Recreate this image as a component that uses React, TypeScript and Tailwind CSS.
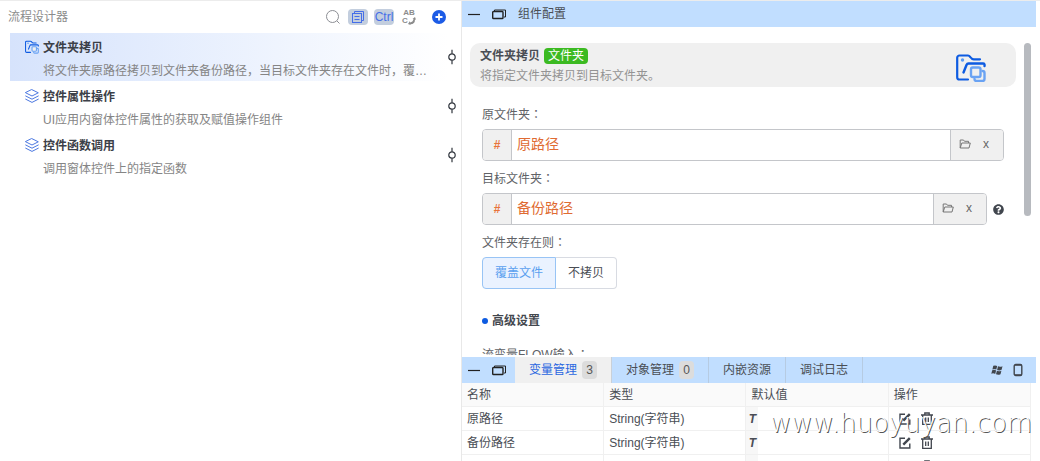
import React, { useState } from 'react';
import { FaQuestionCircle } from 'react-icons/fa';

type Step = {
  title: string;
  desc: string;
  icon: 'folder' | 'layers';
};

const steps: Step[] = [
  {
    title: '文件夹拷贝',
    desc: '将文件夹原路径拷贝到文件夹备份路径，当目标文件夹存在文件时，覆盖文件',
    icon: 'folder',
  },
  { title: '控件属性操作', desc: 'UI应用内窗体控件属性的获取及赋值操作组件', icon: 'layers' },
  { title: '控件函数调用', desc: '调用窗体控件上的指定函数', icon: 'layers' },
];

const tabs = [
  { name: '变量管理', count: 3 },
  { name: '对象管理', count: 0 },
  { name: '内嵌资源' },
  { name: '调试日志' },
];

const variables = [
  { name: '原路径', type: 'String(字符串)' },
  { name: '备份路径', type: 'String(字符串)' },
  { name: '', type: '' },
];

const FolderCopyIcon = ({ className }: { className: string }) => (
  <svg viewBox="0 0 30 28" fill="none" strokeLinecap="round" strokeLinejoin="round" className={className}>
    <path d="M12 25.500H3.500a2.300 2.300 0 0 1-2.300-2.300V3.800a2.300 2.300 0 0 1 2.300-2.300H12c1 0 1.500.5 2.200 1.500 1 1.500 2 2.300 3.500 2.300H24" stroke="#0d5be1" strokeWidth="2.200" />
    <path d="M7.500 18.500l3-7.500c.4-1 1-1.500 2-1.500h14.500c1.500 0 1.800 1 1.500 2.500" stroke="#0d5be1" strokeWidth="2.400" />
    <circle cx="6.500" cy="6" r="1.700" fill="#5a9bf5" />
    <rect x="15" y="13.500" width="9.500" height="9.500" rx="1.800" fill="#f0f0f0" stroke="#6aa3f3" strokeWidth="2.400" />
    <path d="M26.500 17a2 2 0 0 1 2 2v6a2 2 0 0 1-2 2h-6a2 2 0 0 1-2-2" stroke="#6aa3f3" strokeWidth="2.400" />
  </svg>
);

const LayersIcon = () => (
  <svg viewBox="0 0 14 14" fill="none" stroke="#4c78e0" strokeLinejoin="round" strokeLinecap="round" className="h-3.5 w-3.5">
    <path d="M7 .7 13.300 3.800 7 7 .7 3.800z" />
    <path d="M.7 7l6.300 3.200L13.300 7" />
    <path d="M.7 10.200l6.300 3.200 6.300-3.200" />
  </svg>
);

const CommitIcon = () => (
  <svg viewBox="0 0 8 16" fill="none" stroke="#30353d" strokeWidth="1.200" className="h-4 w-2">
    <circle cx="4" cy="8" r="3.200" />
    <path d="M4 .8v4M4 11.200v4" />
  </svg>
);

const FolderOpenIcon = () => (
  <svg viewBox="0 0 12 10" fill="none" stroke="#777" strokeLinejoin="round" className="h-2.5 w-3">
    <path d="M1.200 9V1h3.300l1 1.300h4V4M1.200 9l1.600-5h8.500L10 9z" />
  </svg>
);

// The colon sits in the middle of its box only in the Traditional Chinese face
const Colon = () => <span className="font-['Noto_Sans_CJK_TC',sans-serif]">：</span>;

const PanelButtons = () => (
  <div className="flex w-[53px] items-center gap-3 pl-1.5">
    <button type="button" aria-label="最小化" className="flex">
      <svg viewBox="0 0 12 12" className="h-3 w-3" stroke="#222" strokeWidth="1.200">
        <path d="M0 6.500h12" />
      </svg>
    </button>
    <button type="button" aria-label="还原" className="flex">
      <svg viewBox="0 0 14 12" fill="none" stroke="#222" className="h-3 w-3.5">
        <path d="M2.500 3.500V2h11v7H12" />
        <rect x=".7" y="3.500" width="10.300" height="7" rx=".8" strokeWidth="1.400" />
      </svg>
    </button>
  </div>
);

const PathField = ({ id, label, value, help }: { id: string; label: string; value: string; help?: boolean }) => {
  const [path, setPath] = useState(value);

  return (
    <div>
      <label htmlFor={id} className="block h-8 leading-[34px]">
        {label}
        <Colon />
      </label>
      <div className="flex items-center">
        <div className="flex h-8 min-w-0 flex-1 overflow-hidden rounded border border-[#c4c6ca]">
          <span className="flex w-[29px] items-center justify-center border-r border-[#c4c6ca] bg-[#f0f0f0] font-bold text-[#e9743a]">
            #
          </span>
          <input
            id={id}
            value={path}
            onChange={(e) => setPath(e.target.value)}
            className="min-w-0 flex-1 bg-white pb-0.5 pl-[5px] text-sm text-[#e06b32] outline-none"
          />
          <div className="flex w-[53px] items-center gap-3 border-l border-[#c4c6ca] bg-[#f0f0f0] pb-0.5 pl-2">
            <button type="button" aria-label="选择文件夹">
              <FolderOpenIcon />
            </button>
            <button type="button" className="text-[#666]" onClick={() => setPath('')}>
              x
            </button>
          </div>
        </div>
        {help && <FaQuestionCircle className="ml-1.5 h-[11px] w-[11px] text-[#41464e]" />}
      </div>
    </div>
  );
};

const FlowPanel = () => (
  <section className="min-w-0">
    <header className="flex h-8 items-center pr-[15px] pl-2 text-[#8c8c8c]">
      <h2 className="flex-1">流程设计器</h2>
      <button type="button" aria-label="搜索" className="mr-2">
        <svg viewBox="0 0 14 14" fill="none" stroke="#8c8e94" className="h-3.5 w-3.5">
          <circle cx="6.500" cy="6.500" r="6" />
          <path d="M11 11l2.500 2.500" />
        </svg>
      </button>
      <button type="button" aria-label="复制" className="mr-1.5 flex h-4 w-5 items-center justify-center rounded-sm bg-[#c3cede]">
        <svg viewBox="0 0 14 14" fill="none" stroke="#456ee8" className="h-3.5 w-3.5">
          <path d="M3.500 3V1.500h9v9H10.500" />
          <rect x="1.500" y="3.500" width="9" height="9" />
          <path d="M3.500 6.500h5M3.500 9.500h5" />
        </svg>
      </button>
      <button type="button" className="mr-2 flex h-4 w-5 items-center justify-center rounded-sm bg-[#c3cede] text-[#456ee8]">
        Ctrl
      </button>
      <button type="button" className="mr-4 flex h-4 w-3.5 flex-col text-[8px] leading-2 font-bold" aria-label="重命名">
        <span>AB</span>
        <span className="flex items-end">
          C
          <svg viewBox="0 0 8 8" fill="#8c8c8c" className="h-2 w-2">
            <path d="M0 7l2-3v1.500Q5 5 5.500 2L4.500 2 7 0l1 2.800-1-.4Q7 7 2.500 7.200V8z" />
          </svg>
        </span>
      </button>
      <button type="button" aria-label="添加">
        <svg viewBox="0 0 14 14" className="h-3.5 w-3.5">
          <circle cx="7" cy="7" r="7" fill="#1c5be6" />
          <path d="M7 3.500v7M3.500 7h7" stroke="#fff" strokeWidth="1.800" />
        </svg>
      </button>
    </header>

    <ul className="flex flex-col gap-px pr-[5px] pl-2.5">
      {steps.map((step, i) => (
        <li key={step.title} className="flex h-12 items-center">
          <div
            className={
              i === 0
                ? 'flex h-full min-w-0 flex-1 bg-linear-to-r from-[#d6e3fc] to-white pl-[15px]'
                : 'flex h-full min-w-0 flex-1 pl-[15px]'
            }
          >
            <div className="flex h-7 w-[18px] items-center">
              {step.icon === 'folder' ? <FolderCopyIcon className="h-3.5 w-3.5" /> : <LayersIcon />}
            </div>
            <div className="min-w-0 flex-1 pr-4">
              <h3 className="h-7 leading-[30px] font-bold text-[#3c4048]">{step.title}</h3>
              <p className="truncate leading-5 text-[#858585]">{step.desc}</p>
            </div>
          </div>
          <CommitIcon />
        </li>
      ))}
    </ul>
  </section>
);

const ConfigPanel = () => {
  const [mode, setMode] = useState('覆盖文件');

  return (
    <>
      <header className="flex h-[26px] shrink-0 items-center bg-[#c1deff]">
        <PanelButtons />
        <h2 className="pl-[3px]">组件配置</h2>
      </header>
      <div className="mb-0.5 flex min-h-0 flex-1 gap-2 overflow-hidden pt-4 pr-[5px] pl-2">
        <div className="min-w-0 flex-1">
          <div className="flex h-11 items-center rounded-[10px] bg-[#f0f0f0] pr-[30px] pl-2.5">
            <div className="flex-1 pt-0.5">
              <div className="flex h-5 items-center gap-1">
                <h3 className="font-bold">文件夹拷贝</h3>
                <span className="flex h-4 items-center rounded bg-[#3cba22] px-1 text-white">文件夹</span>
              </div>
              <p className="leading-5 text-[#939393]">将指定文件夹拷贝到目标文件夹。</p>
            </div>
            <FolderCopyIcon className="mt-1.5 h-7 w-[30px]" />
          </div>
          <form className="pt-2.5 pr-3 pl-3 text-[#606266]">
            <PathField id="source" label="原文件夹" value="原路径" />
            <PathField id="target" label="目标文件夹" value="备份路径" help />
            <div className="h-8 leading-[34px]">
              文件夹存在则
              <Colon />
            </div>
            <div className="flex h-8">
              {['覆盖文件', '不拷贝'].map((name) => (
                <button
                  key={name}
                  type="button"
                  onClick={() => setMode(name)}
                  className={
                    mode === name
                      ? 'border border-[#98c4f5] bg-[#eaf2ff] px-3 text-[#5aa0ef] first:rounded-l last:rounded-r'
                      : 'border border-[#d8dbe2] px-3 text-[#4a4e55] first:rounded-l first:border-r-0 last:rounded-r last:border-l-0'
                  }
                >
                  {name}
                </button>
              ))}
            </div>
            <h3 className="mt-4 flex h-8 items-center gap-1 font-bold text-[#43474e]">
              <span className="h-1.5 w-1.5 rounded-full bg-[#0d5be1]" />
              高级设置
            </h3>
            <div className="h-8 leading-[34px]">
              流变量FLOW输入
              <Colon />
            </div>
          </form>
        </div>
        <div className="h-[173px] w-[7px] rounded-full bg-[#b7babf]" />
      </div>
    </>
  );
};

const VariablePanel = () => {
  const [active, setActive] = useState(0);

  return (
    <section className="relative h-[104px] shrink-0 overflow-hidden">
      <nav className="flex h-[26px] bg-[#c1deff]">
        <PanelButtons />
        {tabs.map((tab, i) => (
          <button
            key={tab.name}
            type="button"
            onClick={() => setActive(i)}
            className={
              i === active
                ? 'flex items-center gap-[5px] border-r border-[#c9d0d8] bg-[#f0f0f0] px-3.5 text-[#2a67e0]'
                : 'flex items-center gap-[5px] border-r border-[#b6cbe2] px-3.5'
            }
          >
            {tab.name}
            {tab.count !== undefined && (
              <span className="flex h-[18px] w-[15px] items-center justify-center rounded-sm bg-[#dcdcdc] text-[#555]">
                {tab.count}
              </span>
            )}
          </button>
        ))}
        <div className="ml-auto flex items-center gap-2.5 pr-[13px]">
          <svg viewBox="0 0 12 10" fill="#41464e" className="h-2.5 w-3">
            <path d="M2.300.8Q4.300-.1 6.200 1L5.300 4.600Q3.300 3.600 1.400 4.400z" />
            <path d="M7 1.300Q9 2.300 11.500 1.200L10.600 4.800Q8.300 5.900 6.100 4.900z" />
            <path d="M1.200 5.200Q3.200 4.400 5.100 5.400L4.200 8.900Q2.200 7.900.3 8.700z" />
            <path d="M5.900 5.800Q8.100 6.700 10.400 5.700L9.500 9.200Q7.200 10.300 5 9.300z" />
          </svg>
          <svg viewBox="0 0 10 14" fill="none" stroke="#41464e" strokeWidth="1.400" className="h-3.5 w-2.5">
            <rect x="1.200" y="1.500" width="7.600" height="11" rx="1.500" />
            <path d="M2 2h6M2 12h6" />
          </svg>
        </div>
      </nav>
      <div className="pr-[5px]">
        <table className="w-full table-fixed border-separate border-spacing-0 text-left">
          <thead>
            <tr className="h-6 bg-[#fafafa]">
              {['名称', '类型', '默认值', '操作'].map((name) => (
                <th key={name} className="border-r border-b border-[#f0f0f0] p-0 pl-[5px] font-normal">
                  {name}
                </th>
              ))}
            </tr>
          </thead>
          <tbody>
            {variables.map((item, i) => (
              <tr key={i} className="h-6">
                <td className="border-r border-b border-[#f0f0f0] p-0 pl-[5px]">{item.name}</td>
                <td className="border-r border-b border-[#f0f0f0] p-0 pl-[5px]">{item.type}</td>
                <td className="border-r border-b border-[#f0f0f0] p-0">
                  <div className="flex h-[23px] w-3 items-center justify-center bg-[#f7f7f7] font-bold italic">
                    {item.name && 'T'}
                  </div>
                </td>
                <td className="border-r border-b border-[#f0f0f0] p-0 pl-2.5">
                  <div className="flex items-center gap-2.5">
                    <button type="button" aria-label="编辑">
                      <svg viewBox="0 0 12 12" fill="none" stroke="#41464e" strokeWidth="1.400" className="h-3 w-3">
                        <path d="M6 1.200H1v9.800h9.800V6.500" />
                        <path d="M4.300 7.700L10.800 1.200" strokeWidth="2.400" />
                      </svg>
                    </button>
                    <button type="button" aria-label="删除">
                      <svg viewBox="0 0 12 13" fill="none" stroke="#41464e" strokeWidth="1.300" className="h-[13px] w-3">
                        <path d="M0 3h12M3.800 3V1h4.400v2M1.700 3v9.300h8.600V3M4.700 5.500v4.500M7.300 5.500v4.500" />
                      </svg>
                    </button>
                  </div>
                </td>
              </tr>
            ))}
          </tbody>
        </table>
      </div>
      <div className="pointer-events-none absolute top-[50px] right-1 font-['DejaVu_Sans','Liberation_Sans',sans-serif] text-[26px] leading-8 font-extralight whitespace-nowrap text-white [text-shadow:1px_1px_0_#555]">
        www.huoyuyan.com
      </div>
    </section>
  );
};

const App: React.FC = () => {
  return (
    <main className="grid h-screen grid-cols-[89fr_111fr] overflow-hidden border-t border-[#ececec] bg-white pr-1 font-['Liberation_Sans','Noto_Sans_CJK_SC',sans-serif] text-xs text-[#4a4e55]">
      <FlowPanel />
      <section className="flex min-h-0 min-w-0 flex-col border-l border-[#e8e8e8]">
        <ConfigPanel />
        <VariablePanel />
      </section>
    </main>
  );
};

export default App;
